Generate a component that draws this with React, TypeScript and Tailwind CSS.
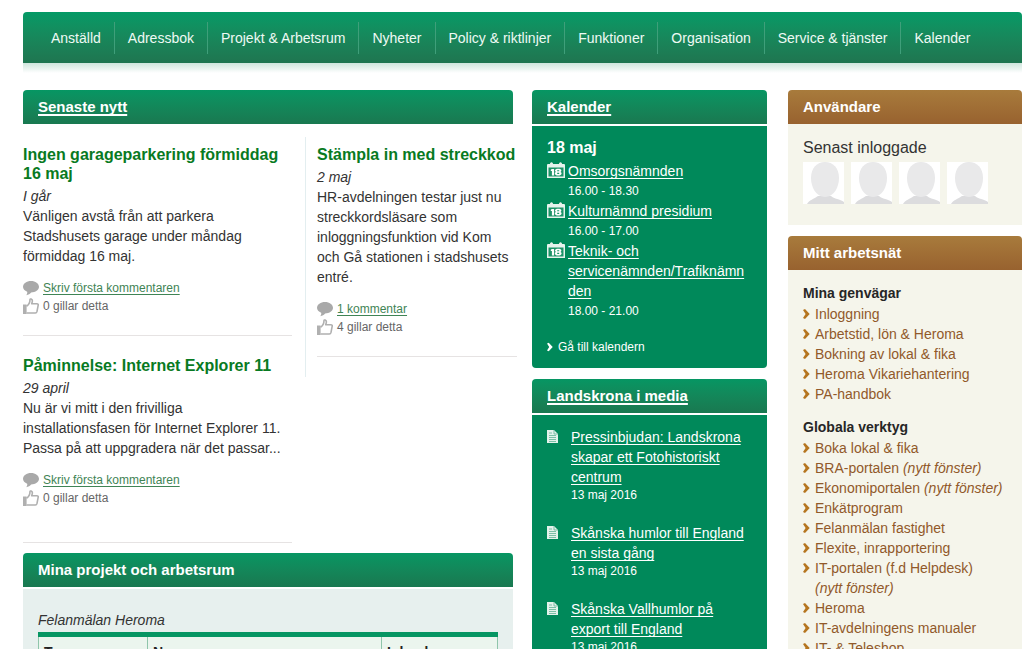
import type { ReactNode } from 'react';

/* ── Data ───────────────────────────────────────────────────────────── */

const NAV_ITEMS = [
  'Anställd',
  'Adressbok',
  'Projekt & Arbetsrum',
  'Nyheter',
  'Policy & riktlinjer',
  'Funktioner',
  'Organisation',
  'Service & tjänster',
  'Kalender',
];

const EVENTS = [
  { title: 'Omsorgsnämnden', time: '16.00 - 18.30' },
  { title: 'Kulturnämnd presidium', time: '16.00 - 17.00' },
  { title: 'Teknik- och servicenämnden/Trafiknämnden', time: '18.00 - 21.00' },
];

const MEDIA = [
  { title: 'Pressinbjudan: Landskrona skapar ett Fotohistoriskt centrum', date: '13 maj 2016' },
  { title: 'Skånska humlor till England en sista gång', date: '13 maj 2016' },
  { title: 'Skånska Vallhumlor på export till England', date: '13 maj 2016' },
];

interface Shortcut {
  label: string;
  newWindow?: boolean;
}

const SHORTCUTS: Shortcut[] = [
  { label: 'Inloggning' },
  { label: 'Arbetstid, lön & Heroma' },
  { label: 'Bokning av lokal & fika' },
  { label: 'Heroma Vikariehantering' },
  { label: 'PA-handbok' },
];

const TOOLS: Shortcut[] = [
  { label: 'Boka lokal & fika' },
  { label: 'BRA-portalen', newWindow: true },
  { label: 'Ekonomiportalen', newWindow: true },
  { label: 'Enkätprogram' },
  { label: 'Felanmälan fastighet' },
  { label: 'Flexite, inrapportering' },
  { label: 'IT-portalen (f.d Helpdesk)', newWindow: true },
  { label: 'Heroma' },
  { label: 'IT-avdelningens manualer' },
  { label: 'IT- & Teleshop' },
];

/* ── Icons ──────────────────────────────────────────────────────────── */

const BubbleIcon = () => (
  <svg className="h-4 w-4 shrink-0" viewBox="0 0 16 16" fill="#a9a9a9" aria-hidden="true">
    <path d="M8 1C3.6 1 0 3.6 0 6.8c0 2.2 1.6 4 4.2 5 .3 1.3-.2 2.4-1 3.4 2.2-.3 3.8-1.3 4.9-2.7C12.500 12.400 16 10 16 6.800 16 3.600 12.400 1 8 1z" />
  </svg>
);

const ThumbIcon = () => (
  <svg className="h-4 w-4 shrink-0" viewBox="0 0 16 16" fill="none" aria-hidden="true">
    <path d="M0 6.500h3.600V16H0z" fill="#b0b0b0" />
    <path
      d="M3.500 8.200C5.500 7 7 5.200 7 1.500c0-.9 2.400-.9 2.400 1.300 0 1.200-.4 1.800-.7 2.900h5.200c1.100 0 1.500.8 1.300 1.500l-1.200 6.200c-.2.9-.7 1.600-1.600 1.600H3.500"
      stroke="#b0b0b0"
      strokeWidth="1.600"
      strokeLinejoin="round"
    />
  </svg>
);

const CalendarIcon = () => (
  <svg className="mt-px h-4 w-[18px] shrink-0" viewBox="0 0 18 16" aria-hidden="true">
    <path d="M0 3q0-1 1-1h16q1 0 1 1v13H0z" fill="#e6f3ed" />
    <path d="M3 1.500Q4.500-1 6 1.500V3H3zM12 1.500q1.500-2.500 3 0V3h-3z" fill="#e6f3ed" />
    <path d="M1.500 5.500h15v9h-15z" fill="#1c9468" />
    <path d="M4.800 7h2.300v6.500H4.900V9H3.800V7.800z" fill="#fff" />
    <path
      d="M11.200 6.800c2 0 3.200.6 3.200 1.700 0 .7-.4 1.100-.9 1.400.7.300 1.100.8 1.100 1.600 0 1.300-1.400 2.100-3.400 2.100s-3.400-.8-3.400-2.100c0-.8.4-1.300 1.100-1.600-.5-.3-.9-.7-.9-1.400 0-1.100 1.200-1.700 3.200-1.700zm-1 1.500v.9h2v-.9zm0 2.500v1.200h2v-1.200z"
      fill="#fff"
      fillRule="evenodd"
    />
  </svg>
);

const DocumentIcon = () => (
  <svg className="mt-[3px] h-[13px] w-[11px] shrink-0" viewBox="0 0 11 13" aria-hidden="true">
    <path d="M0 0h7l4 4v9H0z" fill="#e3f2eb" />
    <path d="M7 0v4h4M2 3h3M2 5.500h7M2 7.500h7M2 9.500h7M2 11.500h7" stroke="#5fb394" strokeWidth=".8" fill="none" />
  </svg>
);

const ChevronIcon = ({ className }: { className: string }) => (
  <svg className={`shrink-0 ${className}`} viewBox="0 0 7 10" fill="currentColor" aria-hidden="true">
    <path d="M0 1l2-1 4.700 5L2 10 0 9l2.600-4z" />
  </svg>
);

const Avatar = () => (
  <svg className="h-[42px] w-[41px]" viewBox="0 0 41 42" role="img" aria-label="Användare">
    <path d="M0 0h41v42H0z" fill="#fff" />
    <path d="M4 42c2-4 7-5 11-8h13c3 3 9 3 13 6v2z" fill="#dcdcde" />
    <path d="M22 0c8 0 14 6 14 16 0 9-5 19-14 19S8 25 8 16C8 6 14 0 22 0z" fill="#e9e9ea" />
  </svg>
);

/* ── Panel header ───────────────────────────────────────────────────── */

interface PanelHeaderProps {
  title: string;
  tone?: 'green' | 'brown';
  linked?: boolean;
}

const PanelHeader = ({ title, tone = 'green', linked }: PanelHeaderProps) => (
  <h2
    className={[
      'flex h-[34px] items-center rounded-t-[4px] px-[15px] text-[15px] font-bold text-white',
      tone === 'green'
        ? 'bg-linear-to-b from-[#069663] to-[#197850]'
        : 'bg-linear-to-b from-[#a87b3c] to-[#98622f]',
    ].join(' ')}
  >
    {linked ? (
      <a href="#" className="underline decoration-2 underline-offset-2 [text-decoration-skip-ink:none]">
        {title}
      </a>
    ) : (
      title
    )}
  </h2>
);

/* ── News article ───────────────────────────────────────────────────── */

interface ArticleProps {
  title: string;
  date: string;
  comments: string;
  likes: string;
  className?: string;
  children: ReactNode;
}

const Article = ({ title, date, comments, likes, className = 'pb-5', children }: ArticleProps) => (
  <article className={`border-b border-[#e6e3e3] ${className}`}>
    <h3 className="text-base leading-[19px] font-bold text-[#087a22]">{title}</h3>
    <p className="mt-[3px] italic">{date}</p>
    <p>{children}</p>
    <div className="mt-[13px] text-xs leading-[18px] text-[#666]">
      <div className="flex items-center gap-1">
        <BubbleIcon />
        <a href="#" className="text-[#3f8455] underline underline-offset-2 [text-decoration-skip-ink:none]">
          {comments}
        </a>
      </div>
      <div className="flex items-center gap-1">
        <ThumbIcon />
        <span>{likes}</span>
      </div>
    </div>
  </article>
);

/* ── Shortcut list ──────────────────────────────────────────────────── */

const ShortcutList = ({ title, items }: { title: string; items: Shortcut[] }) => (
  <section className="mb-[13px]">
    <h3 className="font-bold text-[#262626]">{title}</h3>
    <ul className="mt-px text-[#91592a]">
      {items.map((item) => (
        <li key={item.label} className="flex gap-[5px]">
          <ChevronIcon className="mt-[5px] h-[10px] w-[7px] text-[#b5751f]" />
          <a href="#">
            {item.label}
            {item.newWindow && (
              <>
                {' '}
                <em className="whitespace-nowrap">(nytt fönster)</em>
              </>
            )}
          </a>
        </li>
      ))}
    </ul>
  </section>
);

/* ── Page ───────────────────────────────────────────────────────────── */

export default function App() {
  return (
    <div className="bg-white pt-3 pr-[2px] pl-[23px] font-['Liberation_Sans',Arial,sans-serif] text-sm leading-5 text-[#333]">
      <nav className="flex h-[51px] items-center rounded-t-[4px] bg-linear-to-b from-[#039a66] to-[#1f7550] px-[15px]">
        {NAV_ITEMS.map((item, i) => (
          <a
            key={item}
            href="#"
            className={`flex h-8 items-center px-[13px] whitespace-nowrap text-[#eefaf4] ${i > 0 ? 'border-l border-[#3f9f7a]' : ''}`}
          >
            {item}
          </a>
        ))}
      </nav>
      <div className="h-[10px] bg-linear-to-b from-[#cfe6dd] to-white" />

      <div className="mt-[17px] flex items-start">
        <main className="min-w-0 flex-1">
          <PanelHeader title="Senaste nytt" linked />
          <div className="flex items-start">
            <div className="mr-[13px] min-w-0 flex-1 pt-[21px]">
              <Article
                title="Ingen garageparkering förmiddag 16 maj"
                date="I går"
                comments="Skriv första kommentaren"
                likes="0 gillar detta"
              >
                Vänligen avstå från att parkera Stadshusets garage under måndag förmiddag 16 maj.
              </Article>
              <Article
                title="Påminnelse: Internet Explorer 11"
                date="29 april"
                comments="Skriv första kommentaren"
                likes="0 gillar detta"
                className="pt-5 pb-[35px]"
              >
                Nu är vi mitt i den frivilliga installationsfasen för Internet Explorer 11. Passa på att uppgradera när
                det passar...
              </Article>
            </div>
            <div className="mt-[13px] -mr-1 w-[212px] border-l border-[#e3eef0] pt-2 pb-5 pl-[11px]">
              <Article title="Stämpla in med streckkod" date="2 maj" comments="1 kommentar" likes="4 gillar detta">
                HR-avdelningen testar just nu streckkordsläsare som inloggningsfunktion vid Kom och Gå stationen i
                stadshusets entré.
              </Article>
            </div>
          </div>

          <section className="mt-[10px]">
            <PanelHeader title="Mina projekt och arbetsrum" />
            <div className="mt-[2px] bg-[#e7f0ee] px-[15px] pt-[21px] pb-4">
              <table className="w-full table-fixed border-collapse border border-[#8fc5ab] bg-[#ebf5ee]">
                <caption className="bg-[#e7f0ee] pb-[2px] text-left italic">Felanmälan Heroma</caption>
                <thead>
                  <tr className="border-t-[5px] border-t-[#069663] text-[#222]">
                    <th className="w-[109px] border-r border-[#8fc5ab] px-[5px] pt-[5px] text-left">Typ</th>
                    <th className="border-r border-[#8fc5ab] px-[5px] pt-[5px] text-left">Namn</th>
                    <th className="w-[116px] px-[5px] pt-[5px] text-left">Inlagd</th>
                  </tr>
                </thead>
              </table>
            </div>
          </section>
        </main>

        <div className="mr-[21px] ml-[19px] w-[235px] shrink-0 text-white">
          <section>
            <PanelHeader title="Kalender" linked />
            <div className="mt-[2px] rounded-b-[4px] bg-[#00895a] px-[15px] pt-3 pb-[11px]">
              <h3 className="text-base leading-5 font-bold">18 maj</h3>
              <ul className="mt-[3px] pr-1">
                {EVENTS.map((event) => (
                  <li key={event.title} className="flex gap-[3px]">
                    <CalendarIcon />
                    <div className="min-w-0 flex-1">
                      <a
                        href="#"
                        className="wrap-break-word underline underline-offset-2 [text-decoration-skip-ink:none]"
                      >
                        {event.title}
                      </a>
                      <p className="text-xs leading-5">{event.time}</p>
                    </div>
                  </li>
                ))}
              </ul>
              <a href="#" className="mt-4 flex items-center gap-[5px] text-xs leading-5">
                <ChevronIcon className="h-[10px] w-[6px]" />
                Gå till kalendern
              </a>
            </div>
          </section>

          <section className="mt-[11px]">
            <PanelHeader title="Landskrona i media" linked />
            <ul className="mt-[2px] flex flex-col gap-5 bg-[#00895a] px-[15px] pt-3 pb-5">
              {MEDIA.map((item) => (
                <li key={item.title} className="flex gap-[13px]">
                  <DocumentIcon />
                  <div className="min-w-0 flex-1">
                    <a href="#" className="underline underline-offset-2 [text-decoration-skip-ink:none]">
                      {item.title}
                    </a>
                    <p className="text-xs leading-4">{item.date}</p>
                  </div>
                </li>
              ))}
            </ul>
          </section>
        </div>

        <aside className="w-[234px] shrink-0">
          <section>
            <PanelHeader title="Användare" tone="brown" />
            <div className="bg-[#f5f5eb] px-[15px] pt-[14px] pb-[21px]">
              <p className="text-base leading-5">Senast inloggade</p>
              <div className="mt-1 flex gap-[7px]">
                <Avatar />
                <Avatar />
                <Avatar />
                <Avatar />
              </div>
            </div>
          </section>

          <section className="mt-[11px]">
            <PanelHeader title="Mitt arbetsnät" tone="brown" />
            <div className="bg-[#f5f5eb] py-[13px] pr-2 pl-[15px]">
              <ShortcutList title="Mina genvägar" items={SHORTCUTS} />
              <ShortcutList title="Globala verktyg" items={TOOLS} />
            </div>
          </section>
        </aside>
      </div>
    </div>
  );
}
